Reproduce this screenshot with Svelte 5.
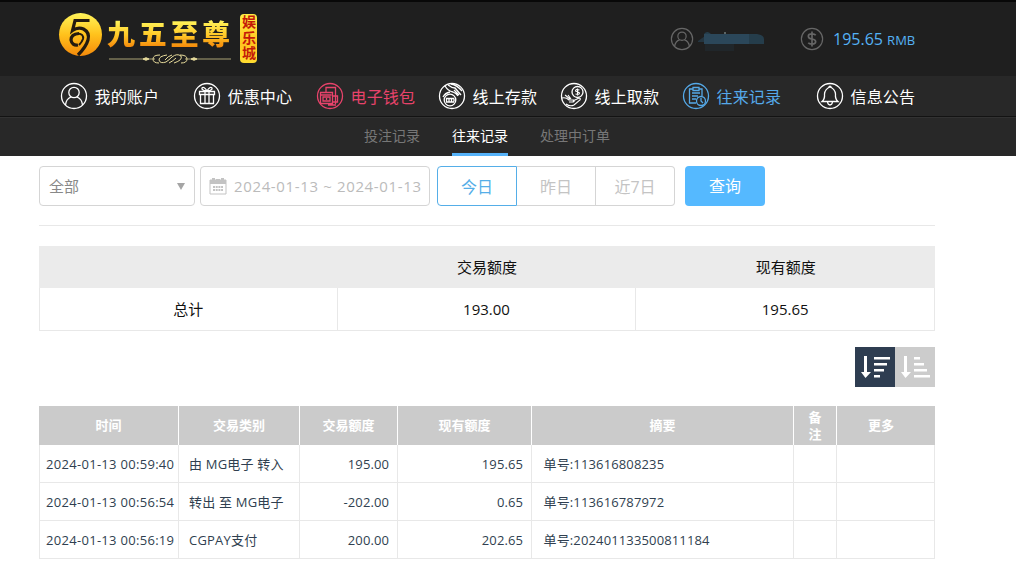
<script lang="ts">
    let active = 'records';
    let range = '今日';
    let descending = true;

    const menu = [
        { id: 'account', label: '我的账户' },
        { id: 'gift', label: '优惠中心' },
        { id: 'wallet', label: '电子钱包' },
        { id: 'deposit', label: '线上存款' },
        { id: 'withdraw', label: '线上取款' },
        { id: 'records', label: '往来记录' },
        { id: 'notice', label: '信息公告' }
    ];
    const ranges = ['今日', '昨日', '近7日'];
    const rows = [
        { time: '2024-01-13 00:59:40', type: '由 MG电子 转入', amount: '195.00', balance: '195.65', order: '113616808235' },
        { time: '2024-01-13 00:56:54', type: '转出 至 MG电子', amount: '-202.00', balance: '0.65', order: '113616787972' },
        { time: '2024-01-13 00:56:19', type: 'CGPAY支付', amount: '200.00', balance: '202.65', order: '202401133500811184' }
    ];
</script>

<header>
    <div class="logo">
        <svg class="emblem" width="44" height="44" viewBox="0 0 44 44">
            <defs>
                <linearGradient id="gold" x1="0" y1="0" x2="0" y2="1">
                    <stop offset="0" stop-color="#fff45a" />
                    <stop offset=".5" stop-color="#ffc21c" />
                    <stop offset="1" stop-color="#f58a0b" />
                </linearGradient>
            </defs>
            <circle cx="22.500" cy="21.500" r="21.500" fill="url(#gold)" />
            <path d="M31.500 7.500H17L14.500 17.500Q20 13.500 25.500 16Q32 19.500 30 27Q28 34 20 42" fill="none" stroke="#241b10" stroke-width="3.200" />
            <path d="M21 20.500Q13 21 13 27Q14 33 20 32" fill="none" stroke="#241b10" stroke-width="3.200" />
            <path d="M20 20.500Q26 21 25 26Q24 29 21 32" fill="none" stroke="#241b10" stroke-width="2" />
        </svg>
        <div class="brand">
            <div class="name">九五至尊</div>
            <svg class="flourish" width="126" height="12" viewBox="0 0 126 12" fill="none" stroke="#e8dc9c">
                <path d="M2 6H48M78 6H124" stroke-width=".7" />
                <path d="M36 6l3-1.300 3 1.300-3 1.300zM84 6l3-1.300 3 1.300-3 1.300z" fill="#e8dc9c" />
                <path d="M53 2Q46 2 46 6Q46 10 52 10M73 2Q80 2 80 6Q80 10 74 10M60 2Q52 3 52 7Q53 11 59 9Q62 7 65 4Q70 0 74 3Q76 7 67 10M58 7Q61 3 65 2M62 10Q66 8 69 5" />
            </svg>
        </div>
        <div class="seal">娱乐城</div>
    </div>
    <div class="status">
        <svg class="grey" width="24" height="24" viewBox="0 0 26 26">
            <circle cx="13" cy="13" r="11.5" /><circle cx="13" cy="10" r="4.5" /><path d="M5 21Q6 15 10.5 14M15.500 14Q20 15 21 21" />
        </svg>
        <svg class="mask" width="70" height="26" viewBox="0 0 70 26">
            <path d="M1 15L8 10V16H1Z" fill="#243540" />
            <path d="M7 8Q10 4 14 8H28L60 8Q67 9 67 13V18H7Z" fill="#253d4b" />
            <path d="M7 8H52V18H7Z" fill="#2b475a" />
            <path d="M8 18H37V25H8Z" fill="#20262a" />
            <path d="M27 7h2" stroke="#9aa" />
        </svg>
        <svg class="grey coin" width="24" height="24" viewBox="0 0 26 26">
            <circle cx="13" cy="13" r="11.5" /><path d="M17 9Q16 7.500 13 7.500Q9 7.500 9 10Q9 12.500 13 13Q17 13.500 17 16Q17 18.500 13 18.500Q10 18.500 9 17M13 5V21" stroke-width="1.8" />
        </svg>
        <div class="money">195.65 <small>RMB</small></div>
    </div>
</header>

<nav class="menu">
    {#each menu as item}
        <a class={item.id} class:active={active === item.id}>
            <svg width="28" height="28" viewBox="0 0 28 28">
                <circle cx="14" cy="14" r="12.500" />
                {#if item.id === 'account'}
                    <circle cx="14" cy="10.500" r="5.200" />
                    <path d="M5.500 23Q6 17 11 15M17 15Q22 17 22.500 23" />
                {:else if item.id === 'gift'}
                    <path d="M6.500 9.500h15v3h-15zM7.500 12.500h13v9h-13zM12 9.500v12M16 9.500v12M14 9Q8 8 9 6Q11 4 14 9Q17 4 19 6Q20 8 14 9" />
                {:else if item.id === 'wallet'}
                    <path d="M4.500 10.500h12v11h-12zM10 10V5.500h9.500V22M4.500 13h11M7 15v4h7v-4zM10.500 16v2M16.500 14h5v6h-5M12 23h8" />
                {:else if item.id === 'deposit'}
                    <path d="M7 4Q10 9 15 10Q18 11 20 14M10 3Q14 6 17 6L23 13M13 2Q19 3 24 9M16 8l5 5" />
                    <circle cx="12" cy="18" r="5.800" />
                    <path d="M8 16.500h8M8.500 19.500v-3M11 19.500v-3M13.500 19.500v-3M16 19.500v-3M8 20h8M5 15Q7 11 12 10" />
                {:else if item.id === 'withdraw'}
                    <circle cx="17.500" cy="10" r="5.500" />
                    <path d="M19.500 8Q15.500 6.500 15.500 9Q17.500 9.500 19.500 11Q19.500 13 15.500 12M17.500 6.500v7M2 16Q6 15 9 18L14 18Q15 20 12 20H9M13 19l6-3Q21 16 20 18L14 23Q10 25 6 22M5 13l5 4M8 13l3 4" stroke-width="1.1" />
                {:else if item.id === 'records'}
                    <path d="M11 7H7.500v14H14M17 7h3v7M11 5.500h6v3h-6zM10 11h8M10 14h6M10 17h4" />
                    <circle cx="19" cy="19" r="4.500" /><path d="M19 16v3l2 2" />
                {:else}
                    <path d="M6 19.500Q9 17 8.500 12Q9 7 14 5Q19 7 19.500 12Q19 17 22 19.500ZM12.500 5.500Q14 3 15.500 5.500M11.500 20Q12 23 14 23Q16 23 16.500 20" />
                {/if}
            </svg>
            <span>{item.label}</span>
        </a>
    {/each}
</nav>
<nav class="sub">
    <a>投注记录</a>
    <a class="current">往来记录</a>
    <a>处理中订单</a>
</nav>

<main>
    <div class="filter">
        <div class="select"><span>全部</span><i></i></div>
        <div class="date">
            <svg width="18" height="18" viewBox="0 0 18 18">
                <path d="M1 3h16v14H1z" fill="none" stroke="#c3c3c3" />
                <path d="M1 3h16v4H1zM3 1h3v4H3zM12 1h3v4h-3zM7 2h4v3H7z" fill="#c3c3c3" />
                <path d="M4 10h10M4 13h10" stroke="#c3c3c3" stroke-width="2" stroke-dasharray="2 .7" />
            </svg>
            <span>2024-01-13 ~ 2024-01-13</span>
        </div>
        <div class="ranges">
            {#each ranges as r}
                <button class:on={range === r} on:click={() => range = r}>{r}</button>
            {/each}
        </div>
        <button class="query">查询</button>
    </div>

    <table class="total">
        <thead><tr><th></th><th>交易额度</th><th>现有额度</th></tr></thead>
        <tbody><tr><td>总计</td><td>193.00</td><td>195.65</td></tr></tbody>
    </table>

    <div class="sort">
        <button class:on={descending} on:click={() => descending = true}>
            <svg width="40" height="40" viewBox="0 0 40 40"><path d="M9 9h3v16h4l-5.500 6L6 25h3zM19 10h16v2.500H19zM19 16h13v2.500H19zM19 22h10v2.500H19zM19 28h6v2.500h-6z" /></svg>
        </button>
        <button class:on={!descending} on:click={() => descending = false}>
            <svg width="40" height="40" viewBox="0 0 40 40"><path d="M9 9h3v16h4l-5.500 6L6 25h3zM19 10h6v2.500h-6zM19 16h10v2.500H19zM19 22h13v2.500H19zM19 28h16v2.500H19z" /></svg>
        </button>
    </div>

    <table class="list">
        <colgroup><col class="c1" /><col class="c2" /><col class="c3" /><col class="c4" /><col class="c5" /><col class="c6" /><col class="c7" /></colgroup>
        <thead>
            <tr><th>时间</th><th>交易类别</th><th>交易额度</th><th>现有额度</th><th>摘要</th><th>备<br />注</th><th class="more">更多</th></tr>
        </thead>
        <tbody>
            {#each rows as row}
                <tr>
                    <td class="time">{row.time}</td>
                    <td class="type">{row.type}</td>
                    <td class="num">{row.amount}</td>
                    <td class="num">{row.balance}</td>
                    <td class="memo">单号:{row.order}</td>
                    <td></td>
                    <td></td>
                </tr>
            {/each}
        </tbody>
    </table>
</main>

<style>
    :global(body) {
        background: #fff;
        font-family: "Open Sans", "Noto Sans CJK SC", sans-serif;
        overflow: hidden;
    }
    header {
        box-sizing: border-box;
        height: 76px;
        background: #1f1f1f;
        border-top: 2px solid #080808;
        display: flex;
        justify-content: space-between;
        padding: 0 100px 0 58px;
    }
    .logo {
        display: flex;
        padding-top: 11px;
    }
    .brand {
        width: 126px;
        margin-left: 5px;
    }
    .name {
        height: 40px;
        line-height: 40px;
        font-family: "Noto Sans CJK SC", sans-serif;
        font-size: 28px;
        font-weight: 900;
        letter-spacing: 3.7px;
        white-space: nowrap;
        background: linear-gradient(#fff45a 20%, #ffc928 55%, #f58a0b 85%);
        background-clip: text;
        color: transparent;
    }
    .flourish {
        display: block;
    }
    .seal {
        box-sizing: border-box;
        width: 17px;
        height: 49px;
        margin: 1px 0 0 7px;
        padding-top: 1px;
        border-radius: 4px;
        background: linear-gradient(#ffef45, #ffc51f 60%, #ffdc30);
        color: #c41a08;
        font: 700 14px/17px "Noto Sans CJK SC", sans-serif;
        letter-spacing: 1.5px;
        writing-mode: vertical-rl;
        white-space: nowrap;
    }
    .status {
        display: flex;
        align-items: center;
    }
    svg {
        flex: none;
    }
    .grey {
        fill: none;
        stroke: #666;
        stroke-width: 1.3;
    }
    .mask {
        margin: 0 0 0 3px;
    }
    .coin {
        margin-left: 33px;
    }
    .money {
        margin-left: 9px;
        width: 83px;
        white-space: nowrap;
        font-size: 16px;
        color: #55b2f5;
    }
    small {
        font-size: 13px;
    }
    .menu {
        box-sizing: border-box;
        height: 41px;
        background: #282828;
        border-bottom: 1px solid #131313;
        display: grid;
        grid-template-columns: 133px 123px 122px 122px 122px 134px 100px;
        padding-left: 60px;
    }
    .menu a {
        display: flex;
        align-items: center;
        gap: 6.5px;
        color: #fff;
        font-size: 16px;
        white-space: nowrap;
    }
    .menu svg {
        fill: none;
        stroke: currentColor;
        stroke-width: 1.3;
    }
    .menu span {
        margin-top: -1px;
        letter-spacing: .15px;
    }
    .menu .wallet {
        color: #e8436b;
    }
    .menu .active {
        color: #55a9e8;
    }
    .sub {
        box-sizing: border-box;
        height: 39px;
        background: #282828;
        border-top: 1px solid #323232;
        display: flex;
        gap: 32px;
        padding-left: 364px;
    }
    .sub a {
        box-sizing: border-box;
        height: 38px;
        line-height: 35px;
        font-size: 14px;
        color: #777;
    }
    .sub .current {
        color: #fff;
        border-bottom: 3px solid #55b2f9;
    }
    main {
        width: 896px;
        margin-left: 39px;
    }
    button {
        padding: 0;
        font: inherit;
        cursor: pointer;
    }
    .filter {
        display: flex;
        padding: 10px 0 19px;
        border-bottom: 1px solid #e8e8e8;
        font-size: 16px;
        color: #bbb;
    }
    .select, .date {
        box-sizing: border-box;
        height: 40px;
        border: 1px solid #d5d5d5;
        border-radius: 4px;
        display: flex;
        align-items: center;
    }
    .select {
        width: 156px;
        padding: 0 9px 2px;
        justify-content: space-between;
        font-size: 15px;
        color: #888;
    }
    .select i {
        margin-top: 3px;
        border: 4.5px solid transparent;
        border-top: 7px solid #a5a5a5;
        border-bottom: 0;
    }
    .date {
        width: 230px;
        margin-left: 5px;
        padding-left: 8px;
        gap: 7px;
        font-size: 15px;
        white-space: nowrap;
        letter-spacing: .64px;
    }
    .ranges {
        display: flex;
        margin-left: 7px;
    }
    .ranges button {
        width: 79px;
        height: 40px;
        border: 1px solid #d5d5d5;
        border-left: 0;
        background: #fff;
        color: #c4c4c4;
    }
    .ranges button:first-child {
        width: 80px;
        border-left: 1px solid #d5d5d5;
        border-radius: 4px 0 0 4px;
    }
    .ranges button:last-child {
        border-radius: 0 4px 4px 0;
    }
    .ranges button.on {
        border-color: #55aee8;
        color: #55aee8;
    }
    .query {
        width: 80px;
        height: 40px;
        margin-left: 10px;
        padding-bottom: 2px;
        border: 0;
        border-radius: 4px;
        background: #55b9ff;
        color: #fff;
    }
    table {
        width: 896px;
        table-layout: fixed;
        border-spacing: 0;
        border-collapse: separate;
    }
    th, td {
        box-sizing: border-box;
        padding: 0;
    }
    .total {
        margin-top: 20px;
        font-size: 15px;
        text-align: center;
        color: #111;
    }
    .total th {
        height: 42px;
        padding-bottom: 2px;
        background: #ebebeb;
        font-weight: 400;
    }
    .total td {
        height: 43px;
        padding-bottom: 1px;
        border-right: 1px solid #e8e8e8;
        border-bottom: 1px solid #e8e8e8;
    }
    .total td:first-child {
        border-left: 1px solid #e8e8e8;
    }
    .sort {
        display: flex;
        justify-content: flex-end;
        margin: 16px 0 19px;
    }
    .sort button {
        width: 40px;
        height: 40px;
        border: 0;
        background: #ccc;
    }
    .sort button.on {
        background: #2e3d51;
    }
    .sort svg {
        display: block;
        fill: #fff;
    }
    .list {
        font-size: 13px;
        color: #303f50;
    }
    .c1 { width: 140px; }
    .c2 { width: 121px; }
    .c3 { width: 98px; }
    .c4 { width: 134px; }
    .c5 { width: 262px; }
    .c6 { width: 43px; }
    .c7 { width: 98px; }
    .list th {
        height: 39px;
        background: #cbcbcb;
        border-right: 1px solid #fff;
        color: #fff;
        line-height: 17px;
    }
    .list th.more {
        border-right: 0;
        padding-right: 10px;
    }
    .list td {
        height: 38px;
        border-right: 1px solid #e8e8e8;
        border-bottom: 1px solid #e8e8e8;
        white-space: nowrap;
    }
    .list td:first-child {
        border-left: 1px solid #e8e8e8;
    }
    .list .time {
        padding-left: 6px;
        letter-spacing: .3px;
    }
    .list .type {
        padding-left: 10px;
        letter-spacing: .2px;
    }
    .list .num {
        padding-right: 8px;
        text-align: right;
        letter-spacing: .1px;
    }
    .list .memo {
        padding-left: 11.5px;
        letter-spacing: .14px;
    }
</style>
